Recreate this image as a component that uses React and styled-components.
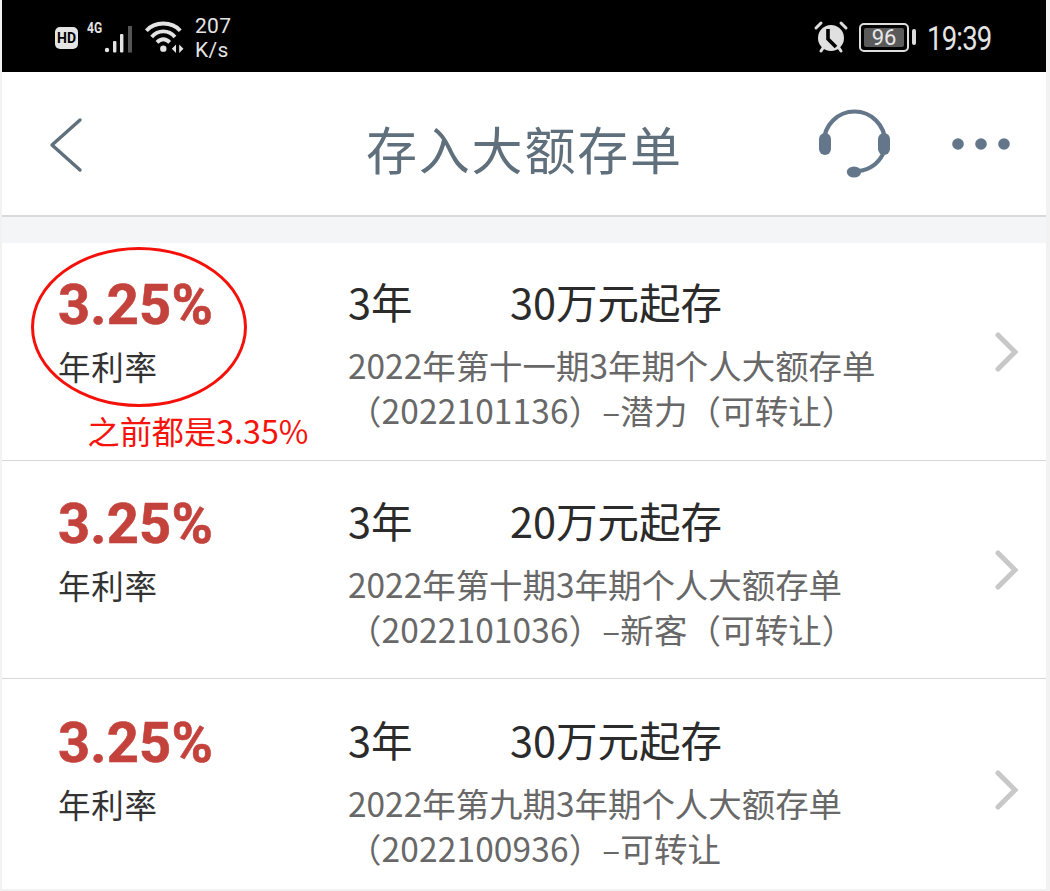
import React from "react";
import styled, { createGlobalStyle } from "styled-components";

const Global = createGlobalStyle`
  html, body { margin: 0; padding: 0; background: #f2f2f2; }
  body { font-family: "Noto Sans CJK SC", "Noto Sans", sans-serif; }
`;
const Page = styled.div`
  width: 1050px; height: 891px; overflow: hidden; background: #f2f2f2;
  padding: 0 4px 2px 2px; box-sizing: border-box; display: flex; flex-direction: column;
`;
const StatusBar = styled.div`
  height: 72px; flex: none; background: #000; color: #e4e4e4;
  display: flex; align-items: center; justify-content: space-between;
  padding: 0 53px 0 53px; font-family: Roboto, sans-serif;
`;
const StatusGroup = styled.div`display: flex; align-items: center;`;
const HdChip = styled.span`
  width: 23px; height: 22px; border-radius: 5px; background: #e4e4e4; color: #000;
  font: 700 14px/22px "Roboto", sans-serif; text-align: center; margin-top: 3px;
`;
const Net = styled.span`
  font: 700 15px/15px Roboto, sans-serif; margin: -16px 0 0 9px; transform: scaleX(.8); transform-origin: left; width: 14px;
`;
const SignalIcon = styled.svg`margin: 3px 0 0 2px;`;
const WifiIcon = styled.svg`margin: 2px 0 0 9px;`;
const Speed = styled.span`
  font: 400 21px/24px Roboto, sans-serif; margin: 3px 0 0 6px; letter-spacing: .3px;
  span { display: block; }
`;
const AlarmIcon = styled.svg`margin-top: 2px;`;
const Clock = styled.span`
  font: 400 34px/36px Roboto, sans-serif; margin: 4px 0 0 12px; letter-spacing: -1px; transform: scaleX(.81); transform-origin: left; width: 66px; white-space: nowrap;
`;
const Battery = styled.span`
  width: 50px; height: 29px; box-sizing: border-box; border: 2px solid #ddd; border-radius: 5px; margin: 2px 6px 0 10px; padding: 3px; display: flex; position: relative;
  &::after { content: ""; position: absolute; right: -9px; top: 4px; width: 4px; height: 16px; background: #ddd; border-radius: 2px; }
`;
const BatteryFill = styled.span`
  flex: 1; background: #5a5a5a; color: #e8e8e8; border-radius: 2px; font: 400 22px/19px Roboto, sans-serif; text-align: center;
`;
const Header = styled.header`
  height: 143px; flex: none; box-sizing: border-box; display: flex; align-items: center; position: relative; background: #fff;
  padding: 2px 36px 0 47px; justify-content: space-between;
`;
const Title = styled.h1`
  position: absolute; left: 364px; top: 44px; margin: 0;
  font: 400 51px/64px "Noto Sans CJK SC", sans-serif; color: #5f6f7b; letter-spacing: 1.8px;
`;
const Actions = styled.div`display: flex; align-items: center; gap: 62px; margin-top: -1px;`;
const Rule = styled.div`height: 2px; flex: none; background: #dadada;`;
const Band = styled.div`height: 26px; flex: none; background: #f4f5f7;`;
const Row = styled.div`
  height: ${p => p.$h}px; flex: none; box-sizing: border-box; position: relative; background: #fff;
  display: flex; align-items: flex-start; padding: ${p => p.$top}px 27px 0 56px;
  border-bottom: ${p => (p.$last ? "none" : "1px solid #d8d8d8")};
`;
const RateCol = styled.div`width: 290px; flex: none;`;
const Rate = styled.div`
  font: 700 56px/60px Roboto, sans-serif; color: #c4423c; letter-spacing: .2px; -webkit-text-stroke: .6px #c4423c;
`;
const RateLabel = styled.div`
  font: 400 32.5px/44px "Noto Sans CJK SC", sans-serif; color: #333; margin-top: 9px; letter-spacing: .8px;
`;
const InfoCol = styled.div`flex: 1;`;
const Terms = styled.div`
  display: flex; font: 400 41.5px/54px "Noto Sans CJK SC", Roboto, sans-serif; color: #2b2b2b; height: 55px; margin-top: -1px;
`;
const TermYear = styled.span`width: 162px;`;
const Desc = styled.div`
  font: 400 33.45px/44.5px "Noto Sans CJK SC", sans-serif; color: #686868; margin-top: 14px; white-space: nowrap;
`;
const CodeLine = styled.span`display: block; letter-spacing: .15px;`;
const NameLine = styled.span`display: block;`;
const Chevron = styled.svg`flex: none; margin-top: ${p => p.$top}px;`;
const Circle = styled.div`
  position: absolute; left: 29px; top: 4px; width: 216px; height: 160px; box-sizing: border-box;
  border: 3px solid #f5110a; border-radius: 50%;
`;
const Note = styled.div`
  position: absolute; left: 85.5px; top: 164px; color: #f5130c;
  font: 400 32.2px/46px "Noto Sans CJK SC", sans-serif; white-space: nowrap;
`;

const rows = [
  { amount: "30万元起存", name: "2022年第十一期3年期个人大额存单", code: "（2022101136）–潜力（可转让）", h: 218, top: 32, chev: 57, note: true },
  { amount: "20万元起存", name: "2022年第十期3年期个人大额存单", code: "（2022101036）–新客（可转让）", h: 218, top: 33, chev: 56 },
  { amount: "30万元起存", name: "2022年第九期3年期个人大额存单", code: "（2022100936）–可转让", h: 210, top: 34, chev: 57, last: true },
];

export default function App() {
  return (
    <Page>
      <Global />
      <StatusBar>
        <StatusGroup>
          <HdChip>HD</HdChip>
          <Net>4G</Net>
          <SignalIcon width="32" height="34" viewBox="0 0 32 34" fill="#e4e4e4">
            <circle cx="4" cy="29" r="2.2" />
            <rect x="10" y="20" width="3.4" height="11.5" rx="1" />
            <rect x="17" y="13" width="3.4" height="18.5" rx="1" />
            <rect x="25" y="5" width="4" height="26.5" fill="#555" />
          </SignalIcon>
          <WifiIcon width="45" height="36" viewBox="0 0 42 34" fill="none" stroke="#e4e4e4" strokeWidth="3.6">
            <path d="M2 11 C10 2 26 2 34 11" />
            <path d="M7 17 C13 10 23 10 29 17" />
            <path d="M12 22 C16 18 20 18 24 22" />
            <circle cx="18" cy="28" r="3" fill="#e4e4e4" stroke="none" />
            <path d="M30 24 L26 28 L30 32 Z M33 24 L37 28 L33 32 Z" fill="#e4e4e4" stroke="none" />
          </WifiIcon>
          <Speed><span>207</span><span>K/s</span></Speed>
        </StatusGroup>
        <StatusGroup>
          <AlarmIcon width="36" height="34" viewBox="0 0 36 34">
            <path d="M3 8 L8 3 M33 8 L28 3 M8 31 L10 28 M28 31 L26 28" stroke="#ddd" strokeWidth="3" strokeLinecap="round" />
            <circle cx="18" cy="18" r="13" fill="#e0e0e0" />
            <path d="M15 9 V19 L23 27" stroke="#000" strokeWidth="3.6" fill="none" />
          </AlarmIcon>
          <Battery><BatteryFill>96</BatteryFill></Battery>
          <Clock>19:39</Clock>
        </StatusGroup>
      </StatusBar>
      <Header>
        <svg width="34" height="56" viewBox="0 0 34 56" fill="none" stroke="#5f6f7b" strokeWidth="3.4" strokeLinecap="round" strokeLinejoin="round">
          <path d="M31 3 L3 28 L31 53" />
        </svg>
        <Title>存入大额存单</Title>
        <Actions>
          <svg width="71" height="70" viewBox="0 0 71 70" fill="#64778a">
            <path d="M5 33 A30.5 30.5 0 0 1 66 33" fill="none" stroke="#64778a" strokeWidth="4.2" />
            <rect x="0" y="24" width="12" height="22" rx="6" />
            <rect x="59" y="24" width="12" height="22" rx="6" />
            <path d="M64 45 A32 32 0 0 1 40 62" fill="none" stroke="#64778a" strokeWidth="4" />
            <ellipse cx="35" cy="63" rx="7.2" ry="5.5" />
          </svg>
          <svg width="58" height="14" viewBox="0 0 58 14" fill="#64778a">
            <circle cx="6" cy="7" r="5.8" /><circle cx="29" cy="7" r="5.8" /><circle cx="52" cy="7" r="5.8" />
          </svg>
        </Actions>
      </Header>
      <Rule />
      <Band />
      {rows.map((r, i) => (
        <Row key={i} $h={r.h} $top={r.top} $last={r.last}>
          <RateCol>
            <Rate>3.25%</Rate>
            <RateLabel>年利率</RateLabel>
          </RateCol>
          <InfoCol>
            <Terms><TermYear>3年</TermYear><span>{r.amount}</span></Terms>
            <Desc>
              <NameLine>{r.name}</NameLine>
              <CodeLine>{r.code}</CodeLine>
            </Desc>
          </InfoCol>
          <Chevron $top={r.chev} width="24" height="40" viewBox="0 0 24 40" fill="none" stroke="#c8c8c8" strokeWidth="5" strokeLinecap="round">
            <path d="M3 3 L20 20 L3 37" />
          </Chevron>
          {r.note && <Circle />}
          {r.note && <Note>之前都是3.35%</Note>}
        </Row>
      ))}
    </Page>
  );
}
